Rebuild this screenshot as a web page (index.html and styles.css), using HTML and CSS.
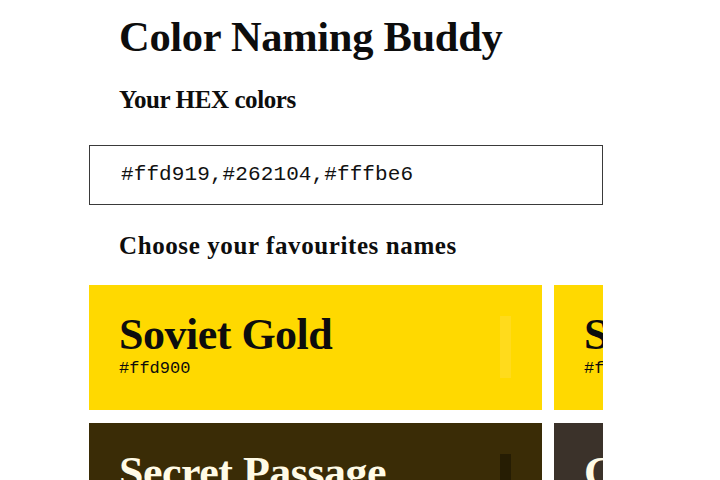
FILE: index.html
```html
<!DOCTYPE html>
<html lang="en">
<head>
<meta charset="utf-8">
<title>Color Naming Buddy</title>
<link rel="stylesheet" href="styles.css">
</head>
<body>
<main class="app">
  <h1 class="title">Color Naming Buddy</h1>
  <h2 class="label">Your HEX colors</h2>
  <div class="input-box"><input class="hex-input" type="text" value="#ffd919,#262104,#fffbe6"></div>
  <h2 class="label label-names">Choose your favourites names</h2>
  <div class="rows">
    <div class="row">
      <div class="card card-gold">
        <div class="card-text">
          <div class="card-name">Soviet Gold</div>
          <div class="card-hex">#ffd900</div>
        </div>
        <div class="card-bar"></div>
      </div>
      <div class="card card-gold">
        <div class="card-text">
          <div class="card-name">Sunflower</div>
          <div class="card-hex">#ffd919</div>
        </div>
        <div class="card-bar"></div>
      </div>
    </div>
    <div class="row">
      <div class="card card-dark">
        <div class="card-text">
          <div class="card-name">Secret Passage</div>
          <div class="card-hex">#372a05</div>
        </div>
        <div class="card-bar"></div>
      </div>
      <div class="card card-gray">
        <div class="card-text">
          <div class="card-name">Grey Mud</div>
          <div class="card-hex">#3a3129</div>
        </div>
        <div class="card-bar"></div>
      </div>
    </div>
  </div>
</main>
</body>
</html>
```

FILE: styles.css
```css
html, body {
  margin: 0;
  padding: 0;
  background: #ffffff;
  overflow: hidden;
}
.app {
  margin-left: 89px;
  width: 514px;
  height: 480px;
  overflow: hidden;
  color: #0d0d0d;
}
.title {
  font-family: "Liberation Serif", "DejaVu Serif", serif;
  font-weight: 700;
  font-size: 42.5px;
  line-height: 1;
  margin: 0;
  padding: 16px 0 0 30px;
  letter-spacing: -0.3px;
}
.label {
  font-family: "Liberation Serif", "DejaVu Serif", serif;
  font-weight: 700;
  font-size: 25px;
  line-height: 1;
  margin: 0;
  padding: 28px 0 0 30px;
  letter-spacing: -0.4px;
}
.input-box {
  margin-top: 33px;
  height: 60px;
  border: 1px solid #3a3a3a;
  box-sizing: border-box;
  display: flex;
  align-items: center;
}
.hex-input {
  border: 0;
  outline: 0;
  background: transparent;
  font-family: "Liberation Mono", "DejaVu Sans Mono", monospace;
  font-size: 21px;
  color: #111;
  padding: 0 0 0 31px;
  width: 100%;
  letter-spacing: 0.1px;
}
.label-names {
  padding-top: 28px;
  letter-spacing: 0.6px;
}
.rows {
  margin-top: 27px;
  display: flex;
  flex-direction: column;
  gap: 13px;
}
.row {
  display: flex;
  gap: 12px;
}
.card {
  flex: 0 0 453px;
  height: 125px;
  display: flex;
  align-items: flex-start;
  justify-content: space-between;
  box-sizing: border-box;
  padding: 28px 30px 0 30px;
  overflow: hidden;
}
.card-gold { background: #ffd900; color: #0d0d0d; }
.card-dark { background: #3a2c06; color: #fffbe6; }
.card-gray { background: #3b322a; color: #fffbe6; }
.card-name {
  font-family: "Liberation Serif", "DejaVu Serif", serif;
  font-weight: 700;
  font-size: 44px;
  line-height: 1;
  letter-spacing: -0.5px;
  white-space: nowrap;
}
.card-hex {
  font-family: "Liberation Mono", "DejaVu Sans Mono", monospace;
  font-size: 17px;
  margin-top: 2px;
}
.card-bar {
  flex: 0 0 11px;
  height: 62px;
  margin-top: 3px;
  margin-right: 1px;
}
.card-gold .card-bar { background: #ffdb1c; }
.card-dark .card-bar { background: #261d03; }
.card-gray .card-bar { background: #2a231d; }
```
